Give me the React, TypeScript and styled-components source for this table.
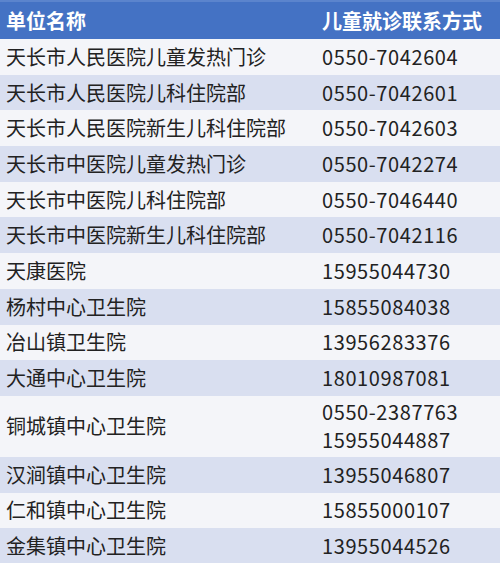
import React from 'react'
import styled, { createGlobalStyle } from 'styled-components'

const GlobalStyle = createGlobalStyle`
  html, body {
    margin: 0;
    padding: 0;
    background: #ffffff;
  }
  body {
    font-family: "Microsoft YaHei", "Noto Sans CJK SC", "Noto Sans", sans-serif;
  }
`

const rows: { name: string; phones: string[] }[] = [
  { name: '天长市人民医院儿童发热门诊', phones: ['0550-7042604'] },
  { name: '天长市人民医院儿科住院部', phones: ['0550-7042601'] },
  { name: '天长市人民医院新生儿科住院部', phones: ['0550-7042603'] },
  { name: '天长市中医院儿童发热门诊', phones: ['0550-7042274'] },
  { name: '天长市中医院儿科住院部', phones: ['0550-7046440'] },
  { name: '天长市中医院新生儿科住院部', phones: ['0550-7042116'] },
  { name: '天康医院', phones: ['15955044730'] },
  { name: '杨村中心卫生院', phones: ['15855084038'] },
  { name: '冶山镇卫生院', phones: ['13956283376'] },
  { name: '大通中心卫生院', phones: ['18010987081'] },
  { name: '铜城镇中心卫生院', phones: ['0550-2387763', '15955044887'] },
  { name: '汉涧镇中心卫生院', phones: ['13955046807'] },
  { name: '仁和镇中心卫生院', phones: ['15855000107'] },
  { name: '金集镇中心卫生院', phones: ['13955044526'] },
]

const App = () => {
  return (
    <>
      <GlobalStyle />
      <Table>
        <colgroup>
          <col style={{ width: 316 }} />
          <col />
        </colgroup>
        <thead>
          <tr>
            <HeadCell>单位名称</HeadCell>
            <HeadCell>儿童就诊联系方式</HeadCell>
          </tr>
        </thead>
        <tbody>
          {rows.map((r, i) => (
            <Row key={r.name} $shaded={i % 2 === 1} $tall={r.phones.length > 1}>
              <Cell>{r.name}</Cell>
              <Cell>
                {r.phones.map((p) => (
                  <Phone key={p}>{p}</Phone>
                ))}
              </Cell>
            </Row>
          ))}
        </tbody>
      </Table>
    </>
  )
}

export default App

const Table = styled.table`
    width: 500px;
    border-collapse: collapse;
    table-layout: fixed;
    color: #222222;
    font-size: 20px;
`
const HeadCell = styled.th`
    height: 38px;
    padding: 0 6px;
    text-align: left;
    font-weight: 700;
    color: #ffffff;
    background-color: #4472c4;
    border-top: 2px solid #5b84cd;
    box-sizing: border-box;
    line-height: 28px;
`
const Row = styled.tr<{ $shaded: boolean; $tall: boolean }>`
    height: ${(p) => (p.$tall ? '61px' : '35.7px')};
    background-color: ${(p) => (p.$shaded ? '#d9dff0' : '#f4f5f9')};
`
const Cell = styled.td`
    padding: 0 6px;
    line-height: 28px;
    vertical-align: middle;
    white-space: nowrap;
`
const Phone = styled.div`
    line-height: 28px;
    letter-spacing: 0.6px;
`
